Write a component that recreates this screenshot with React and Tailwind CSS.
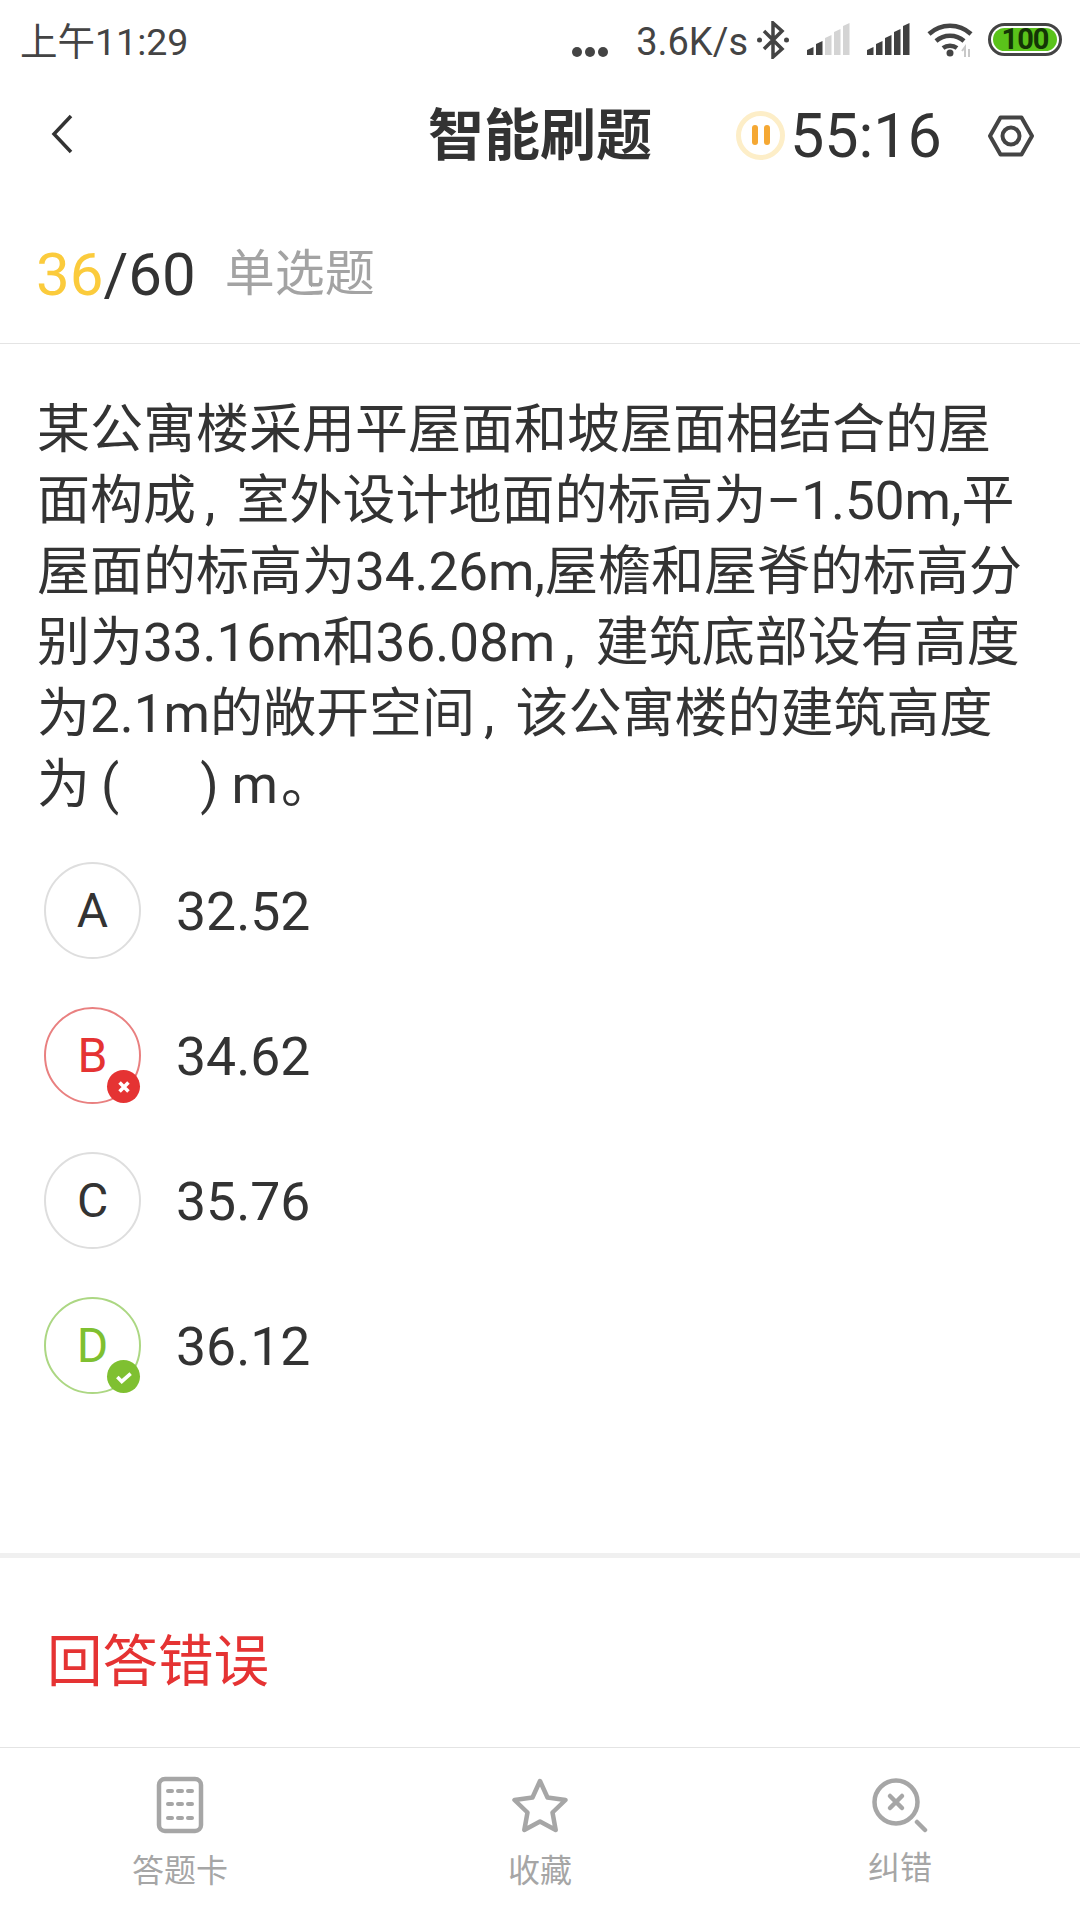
const font = "font-['Roboto','Noto_Sans_CJK_SC',sans-serif]";

const options = [
  { letter: "A", value: "32.52" },
  { letter: "B", value: "34.62", state: "wrong" },
  { letter: "C", value: "35.76" },
  { letter: "D", value: "36.12", state: "right" },
];

// the comma in the reference sits in a wide slot, not at the left of a full-width cell
function Comma() {
  return <span className="ml-[9px] mr-[21px]">,</span>;
}

function Signal({ bars }) {
  return (
    <svg width="44" height="33" viewBox="0 0 44 33">
      {[0, 1, 2, 3, 4].map((i) => {
        const x = i * 9;
        const top = 24 - i * 6;
        return (
          <path
            key={i}
            d={`M${x} 32V${top + 3}L${x + 6.500} ${top}V32z`}
            fill={i < bars ? "#404040" : "#d4d4d4"}
          />
        );
      })}
    </svg>
  );
}

function StatusBar() {
  return (
    <div className="flex h-[75px] items-center justify-between pl-[20px] pr-[18px] pt-[9px] text-[38px] text-[#444]">
      <span className="text-[37.500px]">上午11:29</span>
      <div className="flex items-center">
        <div className="mt-[20px] mr-[28px] flex gap-[3px]">
          <span className="h-[10px] w-[10px] rounded-full bg-[#444]" />
          <span className="h-[10px] w-[10px] rounded-full bg-[#444]" />
          <span className="h-[10px] w-[10px] rounded-full bg-[#444]" />
        </div>
        <span className="mr-[9px]">3.6K/s</span>
        <div className="-mt-[5px] flex items-center">
          <svg width="32" height="38" viewBox="0 0 32 38" className="mr-[18px]" fill="none" stroke="#444" strokeWidth="3.500">
            <path d="M7 10l18 18-9 8V2l9 8-18 18" />
            <circle cx="2.500" cy="19" r="2.500" fill="#444" stroke="none" />
            <circle cx="29.500" cy="19" r="2.500" fill="#444" stroke="none" />
          </svg>
          <div className="mr-[16px]">
            <Signal bars={2} />
          </div>
          <div className="mr-[16px]">
            <Signal bars={5} />
          </div>
          <svg width="46" height="34" viewBox="0 0 46 34" className="mr-[15px]" fill="none" stroke="#444" strokeWidth="4.500">
            <path d="M2 11c12-11 30-11 42 0" />
            <path d="M9 18c8-7 20-7 28 0" />
            <path d="M16 25c4-3 10-3 14 0" />
            <circle cx="23" cy="30" r="3.500" fill="#444" stroke="none" />
            <path d="M38 34V24l-3 4M42 34V26" stroke="#c8c8c8" strokeWidth="2" />
          </svg>
          <div className="flex h-[33px] w-[74px] items-center justify-center rounded-full border-[3px] border-[#444] p-[2px]">
            <div className="flex h-full w-full items-center justify-center rounded-full bg-[#5ac31a] text-[29px] font-bold leading-none tracking-[-1px] text-[#143506]">
              100
            </div>
          </div>
        </div>
      </div>
    </div>
  );
}

function Header() {
  return (
    <div className="relative flex h-[120px] items-center justify-center">
      <svg width="22" height="40" viewBox="0 0 22 40" className="absolute left-[51px] top-[39px]" fill="none" stroke="#333" strokeWidth="3.500">
        <path d="M20 2L3 20l17 18" />
      </svg>
      <h1 className="mt-[2px] text-[56px] font-bold text-[#333]">智能刷题</h1>
      <div className="absolute left-[736px] top-0 flex h-full items-center">
        <div className="flex h-[49px] w-[49px] items-center justify-center gap-[6px] rounded-full border-[5px] border-[#fdeec8]">
          <span className="h-[20px] w-[6px] rounded-full bg-[#f5a833]" />
          <span className="h-[20px] w-[6px] rounded-full bg-[#f5a833]" />
        </div>
        <span className="ml-[5px] mt-[4px] text-[61px] text-[#333]">55:16</span>
      </div>
      <svg width="46" height="42" viewBox="0 0 46 42" className="absolute left-[988px] top-[40px]" fill="none" stroke="#444" strokeWidth="4" strokeLinejoin="round">
        <path d="M12.500 2.500h21L44 21 33.500 39.500h-21L2 21z" />
        <circle cx="23" cy="21" r="8.500" />
      </svg>
    </div>
  );
}

function OptionBadge({ state }) {
  if (!state) return null;
  const right = state === "right";
  return (
    <span className={`absolute -bottom-px -right-px flex h-[33px] w-[33px] items-center justify-center rounded-full ${right ? "bg-[#7fc031]" : "bg-[#e53333]"}`}>
      <svg width="20" height="20" viewBox="0 0 18 18" fill="none" stroke="#fff" strokeWidth="3.200">
        {right ? <path d="M3 9l4 4 8-7" /> : <path d="M5 5l8 8M13 5l-8 8" />}
      </svg>
    </span>
  );
}

function Option({ letter, value, state }) {
  const circle = state === "wrong"
    ? "border-[#e98080] text-[#e53333]"
    : state === "right"
      ? "border-[#acd783] text-[#7fc031]"
      : "border-[#dedede] text-[#333]";
  return (
    <div className="flex h-[97px] items-center">
      <div className={`relative flex h-[97px] w-[97px] items-center justify-center rounded-full border-2 text-[48px] ${circle}`}>
        {letter}
        <OptionBadge state={state} />
      </div>
      <span className="ml-[35px] mt-[4px] text-[53.500px] text-[#333]">{value}</span>
    </div>
  );
}

function Tab({ label, labelClass, children }) {
  return (
    <div className="flex w-[360px] flex-col items-center text-[32px] text-[#a6a6a6]">
      <div className="flex h-[62px] items-center">{children}</div>
      <span className={`leading-[44px] ${labelClass}`}>{label}</span>
    </div>
  );
}

export default function App() {
  return (
    <div className={`flex h-[1920px] w-[1080px] flex-col overflow-hidden bg-white ${font}`}>
      <StatusBar />
      <Header />
      <div className="flex h-[149px] items-center border-b border-[#e4e4e4] pl-[36px] pt-[11px]">
        <span className="text-[60px] text-[#333]">
          <span className="text-[#fbcb3c]">36</span>/60
        </span>
        <span className="ml-[29px] text-[50px] text-[#a3a3a3]">单选题</span>
      </div>
      <p className="mt-[51px] whitespace-nowrap px-[37px] text-[53px] leading-[71px] text-[#333]">
        某公寓楼采用平屋面和坡屋面相结合的屋
        <br />
        面构成<Comma />室外设计地面的标高为–1.50m,平
        <br />
        屋面的标高为34.26m,屋檐和屋脊的标高分
        <br />
        别为33.16m和36.08m<Comma />建筑底部设有高度
        <br />
        为2.1m的敞开空间<Comma />该公寓楼的建筑高度
        <br />
        为<span className="ml-[11px]">(</span>
        <span className="inline-block w-[81px]" />)<span className="ml-[13px]">m</span>
        <span className="ml-[3px]">。</span>
      </p>
      <div className="mt-[41px] flex flex-col gap-[48px] pl-[44px]">
        {options.map((o) => (
          <Option key={o.letter} {...o} />
        ))}
      </div>
      <div className="mt-[159px] h-[5px] bg-[#f0f0f0]" />
      <div className="flex h-[190px] items-center border-b border-[#e4e4e4] pl-[47px] pt-[20px] text-[55.500px] text-[#e53333]">回答错误</div>
      <div className="flex flex-1 pt-[26px]">
        <Tab label="答题卡" labelClass="mt-[13px]">
          <svg width="48" height="58" viewBox="0 0 48 58" fill="none" stroke="#a6a6a6" strokeWidth="4.500">
            <rect x="3" y="3" width="42" height="52" rx="6" />
            <g fill="#a6a6a6" stroke="none">
              {[15, 28, 42].map((y) =>
                [10, 20, 30].map((x) => <rect key={`${x}-${y}`} x={x} y={y - 2} width="8" height="4" rx="2" />)
              )}
            </g>
          </svg>
        </Tab>
        <Tab label="收藏" labelClass="mt-[13px]">
          <svg width="58" height="56" viewBox="0 0 58 56" fill="none" stroke="#a6a6a6" strokeWidth="4.500" strokeLinejoin="round">
            <path d="M29 4l7.500 16.500 18 2.500-13 12.500 3.200 17.500L29 44.500 13.300 53l3.200-17.500L3.500 23l18-2.500z" />
          </svg>
        </Tab>
        <Tab label="纠错" labelClass="mt-[10px]">
          <svg width="58" height="56" viewBox="0 0 58 56" fill="none" stroke="#a6a6a6" strokeWidth="4.500" strokeLinecap="round">
            <circle cx="25" cy="25" r="21.500" />
            <path d="M19 19l12 12M31 19L19 31" />
            <path d="M46 45l8 8" />
          </svg>
        </Tab>
      </div>
    </div>
  );
}
